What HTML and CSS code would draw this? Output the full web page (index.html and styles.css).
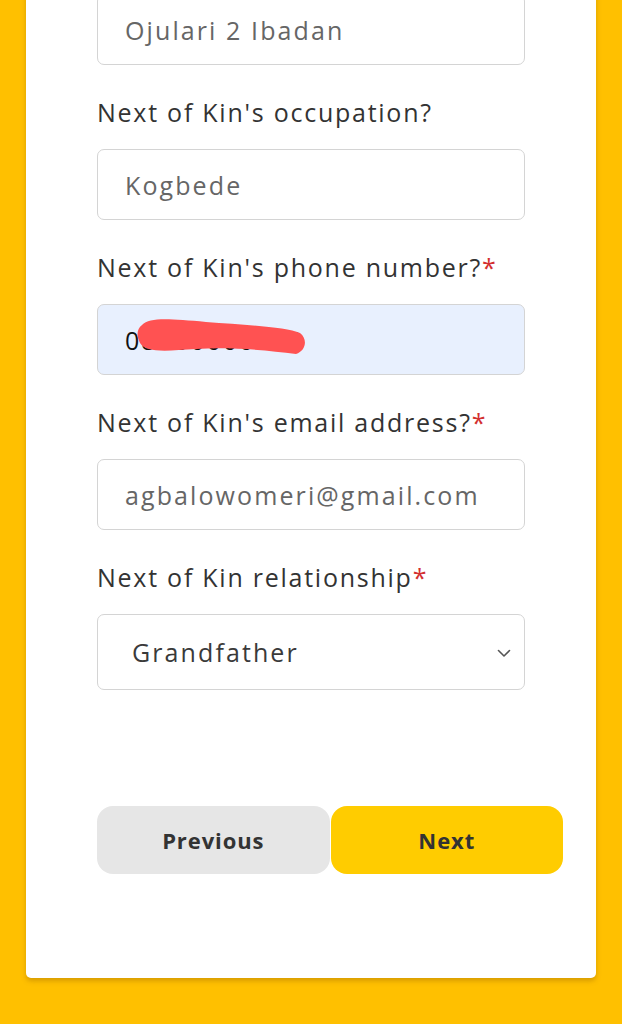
FILE: index.html
```html
<!DOCTYPE html>
<html lang="en">
<head>
<meta charset="utf-8">
<title>Next of Kin</title>
<link rel="stylesheet" href="styles.css">
</head>
<body>
<div class="card">
  <div class="field first">
    <div class="input">Ojulari 2 Ibadan</div>
  </div>
  <div class="field">
    <label class="label">Next of Kin's occupation?</label>
    <div class="input">Kogbede</div>
  </div>
  <div class="field">
    <label class="label">Next of Kin's phone number?<span class="req">*</span></label>
    <div class="input autofill">
      <span class="phone">08000000000</span>
      <svg class="scribble" width="172" height="44" viewBox="0 0 172 44">
        <path d="M6 8 C 14 0, 34 2, 70 5 C 110 8, 150 10, 164 16 C 172 22, 170 34, 160 37 C 130 33, 95 30, 60 32 C 30 34, 10 36, 4 26 C 0 18, 1 12, 6 8 Z" fill="#ff5252"/>
      </svg>
    </div>
  </div>
  <div class="field">
    <label class="label">Next of Kin's email address?<span class="req">*</span></label>
    <div class="input">agbalowomeri@gmail.com</div>
  </div>
  <div class="field">
    <label class="label">Next of Kin relationship<span class="req">*</span></label>
    <div class="select">
      <span class="select-text">Grandfather</span>
      <svg class="chev" width="14" height="9" viewBox="0 0 14 9"><path d="M1.5 1.5 L7 7 L12.5 1.5" fill="none" stroke="#555" stroke-width="1.6" stroke-linecap="round" stroke-linejoin="round"/></svg>
    </div>
  </div>
  <div class="buttons">
    <button class="btn prev">Previous</button>
    <button class="btn next">Next</button>
  </div>
</div>
</body>
</html>
```

FILE: styles.css
```css
html, body {
  margin: 0;
  padding: 0;
}
body {
  background: #ffc000;
  font-family: "Open Sans", "Noto Sans", sans-serif;
  height: 1024px;
  overflow: hidden;
}
.card {
  margin: -40px 0 0 26px;
  width: 570px;
  background: #fff;
  border-radius: 0 0 5px 5px;
  box-shadow: 0 3px 5px rgba(140, 90, 0, 0.35);
  padding: 34px 0 104px 71px;
  box-sizing: border-box;
}
.field {
  display: flex;
  flex-direction: column;
  width: 428px;
}
.label {
  display: block;
  margin-top: 30px;
  margin-bottom: 18px;
  height: 36px;
  line-height: 34px;
  font-size: 25px;
  color: #333;
  letter-spacing: 1.75px;
  white-space: nowrap;
}
.req {
  color: #d32f2f;
}
.input {
  position: relative;
  height: 71px;
  box-sizing: border-box;
  border: 1.5px solid #d4d4d4;
  border-radius: 7px;
  padding: 0 27px;
  display: flex;
  align-items: center;
  font-size: 25px;
  color: #666;
  letter-spacing: 2.1px;
  background: #fff;
}
.input.autofill {
  background: #e8f0fe;
}
.phone {
  color: #111;
  letter-spacing: 2px;
}
.scribble {
  position: absolute;
  left: 38px;
  top: 12px;
}
.select {
  height: 76px;
  box-sizing: border-box;
  border: 1.5px solid #d4d4d4;
  border-radius: 7px;
  padding: 0 13px 0 34px;
  display: flex;
  align-items: center;
  justify-content: space-between;
  background: #fff;
}
.select-text {
  font-size: 25px;
  font-weight: 500;
  color: #3a3a3a;
  letter-spacing: 2.1px;
}
.chev {
  display: block;
  margin-top: 2px;
}
.buttons {
  display: flex;
  gap: 1px;
  margin-top: 116px;
  width: 466px;
}
.btn {
  flex: 1;
  height: 68px;
  border: none;
  border-radius: 16px;
  font-family: "Open Sans", "Noto Sans", sans-serif;
  font-size: 22px;
  font-weight: 700;
  color: #333;
  letter-spacing: 0.9px;
  padding: 0;
}
.btn.prev {
  background: #e6e6e6;
}
.btn.next {
  background: #ffcc00;
}
```
